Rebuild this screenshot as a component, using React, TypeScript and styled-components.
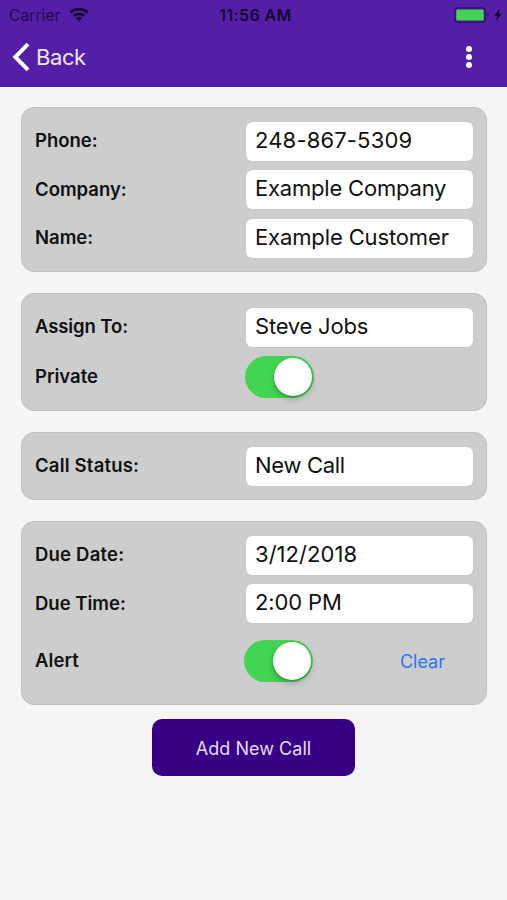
import React from "react";
import styled, { createGlobalStyle } from "styled-components";

const GlobalStyle = createGlobalStyle`
  *, *::before, *::after { box-sizing: border-box; }
  body {
    margin: 0;
    background: #f5f5f5;
    font-family: Inter, "Liberation Sans", sans-serif;
    color: #111;
  }
`;

const Screen = styled.div`
  width: 507px;
  height: 900px;
  display: flex;
  flex-direction: column;
  background: #f5f5f5;
  overflow: hidden;
`;

const Header = styled.header`
  height: 87px;
  flex: none;
  background: #531fa6;
  box-shadow: 0 1px 0 #fdfcff;
`;

const StatusBar = styled.div`
  height: 29px;
  display: grid;
  grid-template-columns: 1fr auto 1fr;
  align-items: center;
  padding: 0 5px 0 9px;
  color: #130632;
`;

const Carrier = styled.div`
  display: flex;
  align-items: center;
  gap: 8px;
  font-size: 15.5px;
  line-height: 19px;
  color: #22094f;
  letter-spacing: 0.1px;

  span {
    padding-top: 1px;
  }
`;

const Clock = styled.div`
  font-size: 16px;
  font-weight: 600;
  letter-spacing: 0.4px;
`;

const Power = styled.div`
  display: flex;
  justify-content: flex-end;
  align-items: center;
  gap: 4px;
`;

const NavBar = styled.nav`
  height: 56px;
  display: flex;
  justify-content: space-between;
  align-items: center;
  padding: 0 33px 0 12px;
`;

const BackButton = styled.button`
  display: flex;
  align-items: center;
  gap: 6px;
  height: 40px;
  padding: 0;
  border: 0;
  background: none;
  color: #efe6ff;
  font: 400 22px/28px Inter, sans-serif;
  letter-spacing: -0.4px;
`;

const MenuButton = styled.button`
  display: flex;
  padding: 0;
  border: 0;
  background: none;
`;

const Form = styled.main`
  display: flex;
  flex-direction: column;
  gap: 21px;
  padding: 20px 20px 0 21px;
`;

const Card = styled.section<{ $height: number }>`
  height: ${(p) => p.$height}px;
  display: flex;
  flex-direction: column;
  gap: 9.3px;
  padding: 13.6px 13px 0 13px;
  background: #cdcdcd;
  border: 1px solid #bfbfbf;
  border-radius: 13px;
`;

const Row = styled.div<{ $offset?: number }>`
  display: grid;
  grid-template-columns: 211px 227px;
  align-items: center;
  height: 39.2px;
  margin-top: ${(p) => p.$offset ?? 0}px;
`;

const Label = styled.span<{ $spacing: number }>`
  padding-bottom: 1.6px;
  font-size: 18.5px;
  font-weight: 600;
  line-height: 24px;
  letter-spacing: ${(p) => p.$spacing}px;
  white-space: nowrap;
`;

const Field = styled.div<{ $spacing: number }>`
  height: 39.2px;
  padding: 0 9px;
  background: #fff;
  border-radius: 6px;
  font-size: 22px;
  line-height: 37px;
  letter-spacing: ${(p) => p.$spacing}px;
  white-space: nowrap;
  box-shadow: 0 0 1px rgba(0, 0, 0, 0.18);
`;

const Controls = styled.div<{ $shift: number }>`
  display: flex;
  align-items: center;
  justify-content: space-between;
  margin-left: ${(p) => p.$shift}px;
  padding-right: 28px;
`;

const Track = styled.div`
  width: 69px;
  height: 42px;
  padding: 2px;
  display: flex;
  justify-content: flex-end;
  background: #43d551;
  border-radius: 21px;
`;

const Knob = styled.div`
  width: 38px;
  height: 38px;
  border-radius: 50%;
  background: #fff;
  box-shadow: 0 3px 7px rgba(0, 0, 0, 0.22), 0 1px 2px rgba(0, 0, 0, 0.2);
`;

const ClearButton = styled.button`
  padding: 2px 0 0;
  border: 0;
  background: none;
  color: #2b78f0;
  font: 400 18px/24px Inter, sans-serif;
  letter-spacing: 0;
`;

const SubmitButton = styled.button`
  align-self: center;
  width: 203px;
  height: 57px;
  margin-top: 14px;
  padding: 2px 0 0;
  border: 0;
  border-radius: 10px;
  background: #370084;
  color: #e9dcfa;
  font: 400 18px/24px Inter, sans-serif;
  letter-spacing: 0.04px;
`;

const WifiIcon = () => (
  <svg width="20" height="15" viewBox="0 0 20 15" fill="none" stroke="#130632">
    <path d="M1.3 5.4C6.2.9 13.8.9 18.7 5.4" strokeWidth="2.7" />
    <path d="M4.6 8.9c3.1-2.7 7.7-2.7 10.8 0" strokeWidth="2.5" />
    <path d="M10 14.2 6.7 10.9c1.9-1.6 4.7-1.6 6.6 0z" fill="#130632" stroke="none" />
  </svg>
);

const BatteryIcon = () => (
  <svg width="36" height="16" viewBox="0 0 36 16">
    <rect x="1" y="1" width="30" height="14" rx="3" fill="none" stroke="#33107a" strokeWidth="1.6" />
    <rect x="2.3" y="2.5" width="27.4" height="11" rx="1.3" fill="#43d551" />
    <path d="M33 5.5c2.2.8 2.2 4.2 0 5z" fill="#33107a" />
  </svg>
);

const BoltIcon = () => (
  <svg width="8" height="12" viewBox="0 0 8 12" fill="#130632">
    <path d="M5.6 0 .2 6.8h2.9L2 12l5.8-7.2H4.7z" />
  </svg>
);

const ChevronIcon = () => (
  <svg width="18" height="30" viewBox="0 0 18 30" fill="none" stroke="#fff" strokeWidth="4">
    <path d="M16 2.2 3.3 15 16 27.8" />
  </svg>
);

const DotsIcon = () => (
  <svg width="10" height="26" viewBox="0 0 10 26" fill="#fff">
    <circle cx="5" cy="5" r="3" />
    <circle cx="5" cy="13" r="3" />
    <circle cx="5" cy="21" r="3" />
  </svg>
);

const Switch = () => (
  <Track role="switch" aria-checked="true">
    <Knob />
  </Track>
);

type FieldRowProps = { label: string; value: string; ls?: number; vs?: number };

const FieldRow = ({ label, value, ls = 0, vs = 0 }: FieldRowProps) => (
  <Row>
    <Label $spacing={ls}>{label}</Label>
    <Field $spacing={vs}>{value}</Field>
  </Row>
);

export default function App() {
  return (
    <>
      <GlobalStyle />
      <Screen>
        <Header>
          <StatusBar>
            <Carrier>
              <span>Carrier</span>
              <WifiIcon />
            </Carrier>
            <Clock>11:56 AM</Clock>
            <Power>
              <BatteryIcon />
              <BoltIcon />
            </Power>
          </StatusBar>
          <NavBar>
            <BackButton>
              <ChevronIcon />
              <span>Back</span>
            </BackButton>
            <MenuButton aria-label="More">
              <DotsIcon />
            </MenuButton>
          </NavBar>
        </Header>
        <Form>
          <Card $height={165}>
            <FieldRow label="Phone:" value="248-867-5309" vs={0.16} />
            <FieldRow label="Company:" value="Example Company" vs={-0.2} />
            <FieldRow label="Name:" value="Example Customer" vs={-0.13} />
          </Card>
          <Card $height={118}>
            <FieldRow label="Assign To:" value="Steve Jobs" ls={-0.1} vs={-0.22} />
            <Row $offset={-0.5}>
              <Label $spacing={0}>Private</Label>
              <Controls $shift={-1}>
                <Switch />
              </Controls>
            </Row>
          </Card>
          <Card $height={68}>
            <FieldRow label="Call Status:" value="New Call" ls={0.2} vs={-0.3} />
          </Card>
          <Card $height={184}>
            <FieldRow label="Due Date:" value="3/12/2018" ls={0.2} vs={0.05} />
            <FieldRow label="Due Time:" value="2:00 PM" vs={-0.12} />
            <Row $offset={7.5}>
              <Label $spacing={0.1}>Alert</Label>
              <Controls $shift={-2}>
                <Switch />
                <ClearButton>Clear</ClearButton>
              </Controls>
            </Row>
          </Card>
        </Form>
        <SubmitButton>Add New Call</SubmitButton>
      </Screen>
    </>
  );
}
